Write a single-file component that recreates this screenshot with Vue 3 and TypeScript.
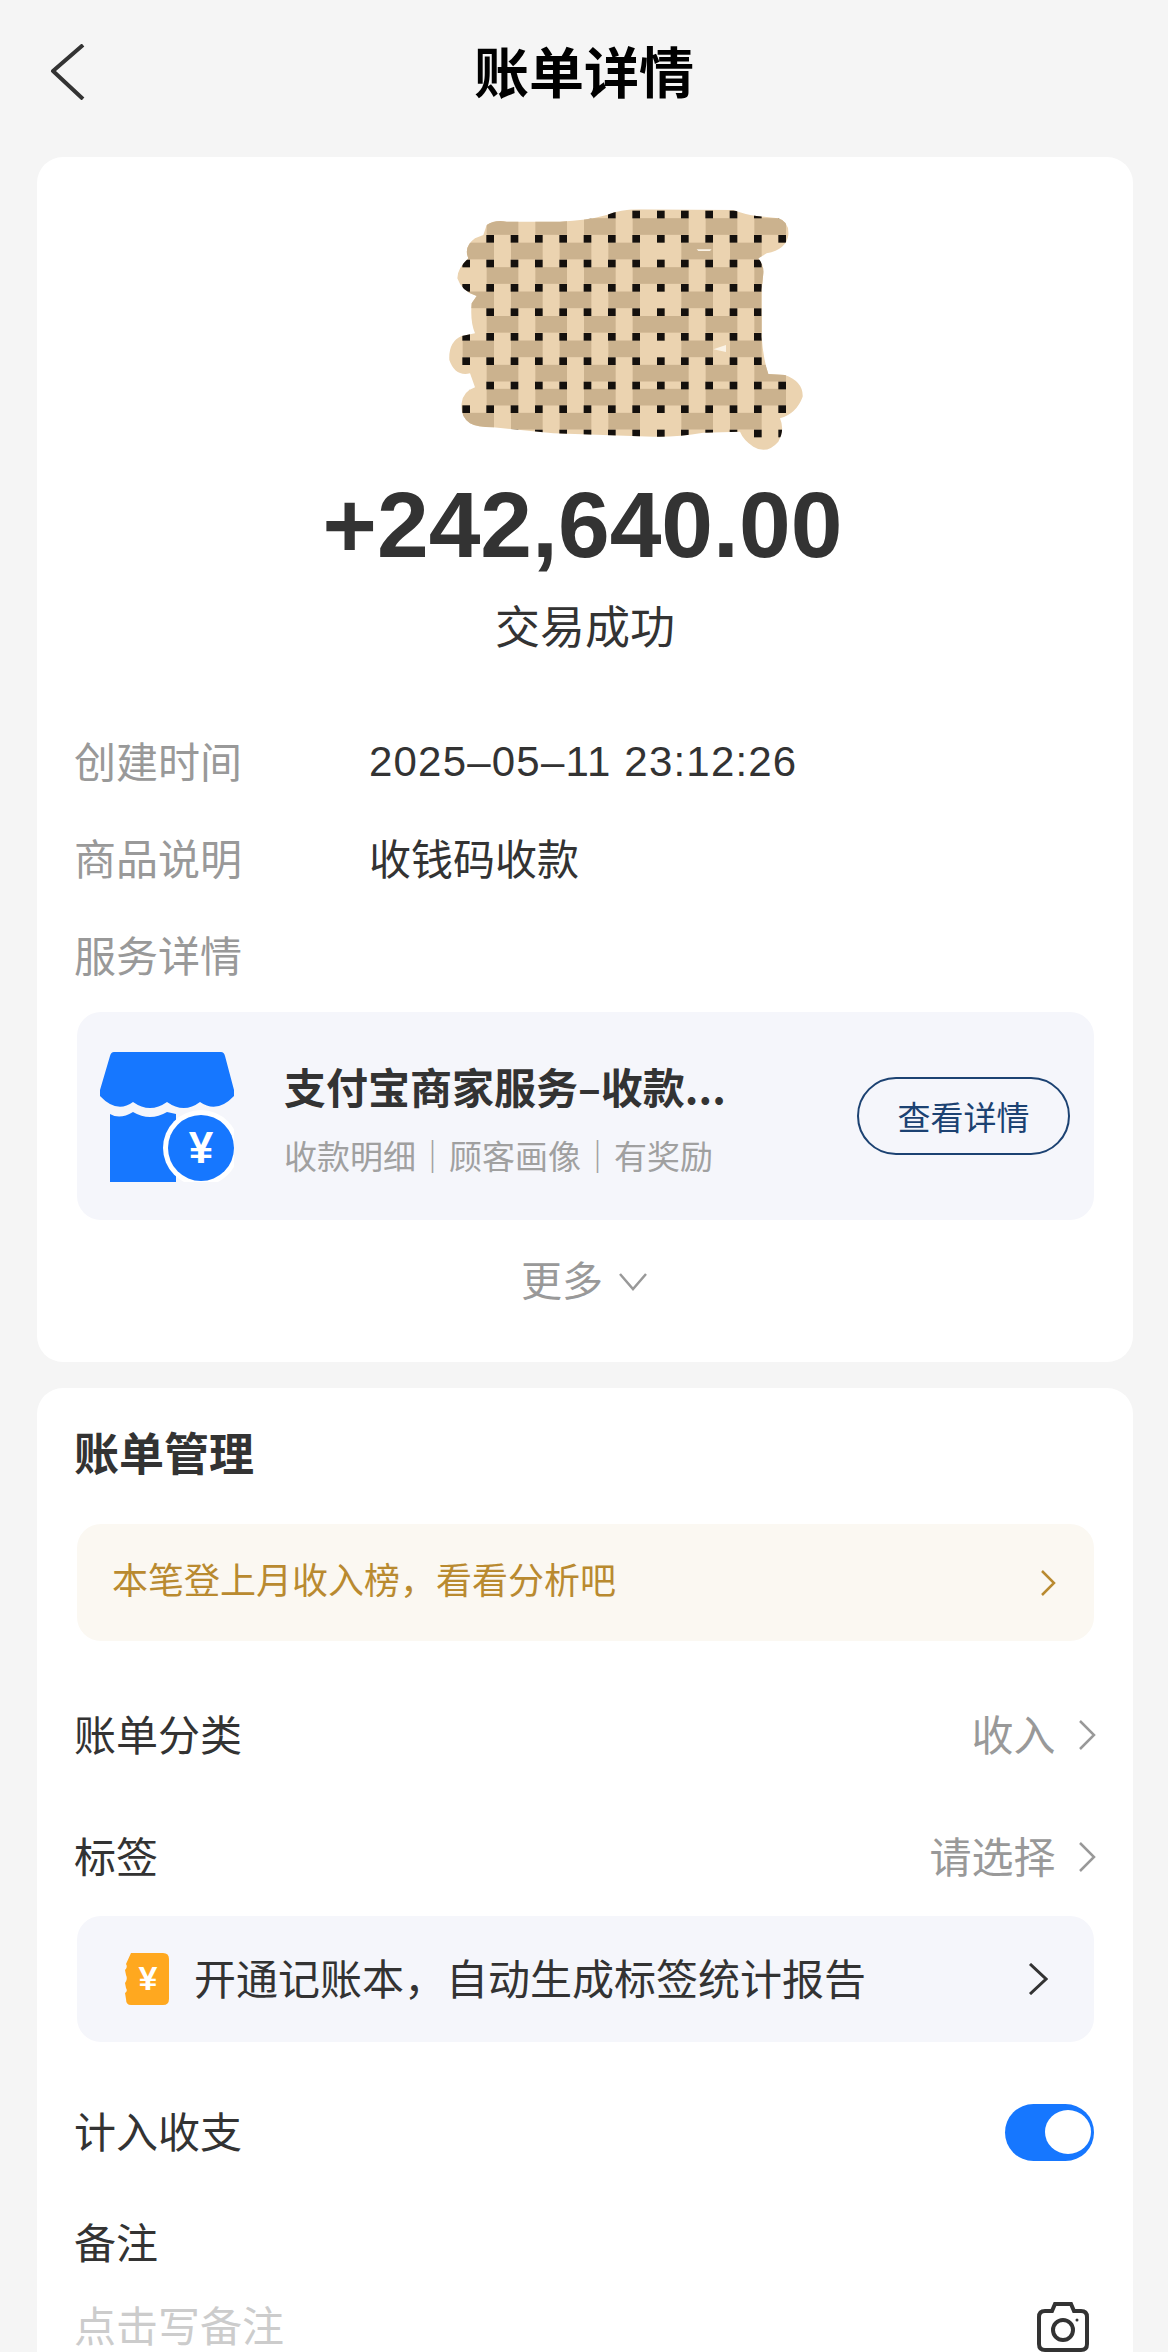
<script setup lang="ts">
// mosaic grid, coordinates are in the 1200x840 viewBox of the redaction block
const colX = [138, 210, 283, 356, 429, 502, 575, 648, 722, 794, 867, 940, 1013, 1086];
const rowY = [73, 146, 220, 293, 366, 440, 513, 586, 657, 730];
const cellsA = [1, 3, 5, 7, 8, 10, 12];
const cellsB = [0, 2, 4, 6, 9, 11];
const rowKinds = ["A", "B", "A", "B", "A", "B", "A", "A", "B"];

const bands = rowKinds.flatMap((kind, r) => {
  const cy = (rowY[r] + rowY[r + 1]) / 2;
  const cells = kind === "A" ? cellsA : cellsB;
  return cells.map((c) => ({
    id: `${r}-${c}`,
    x: colX[c] - 10,
    y: cy - 25,
    w: colX[c + 1] - colX[c] + 22,
  }));
});

const dots = rowY.flatMap((y) => colX.map((x) => ({ id: `${x}-${y}`, x: x - 11, y: y - 11 })));

const blob =
  "M200 105 Q225 88 260 95 L420 95 Q500 92 560 75 Q600 58 660 58 L940 60 Q980 75 1010 78 L1075 85 Q1108 95 1105 135 Q1100 178 1040 190 L1015 205 Q1032 225 1030 250 L1025 300 L1025 440 Q1030 510 1045 552 L1095 555 Q1150 575 1148 620 Q1130 670 1080 685 Q1095 720 1075 755 Q1040 795 1000 770 Q970 750 960 725 L850 728 Q770 742 700 740 L400 730 L220 712 Q170 712 150 700 Q120 680 125 640 Q128 605 165 592 L150 550 Q105 560 88 510 Q85 455 125 438 L165 430 Q150 395 155 340 L170 318 Q125 305 112 265 Q112 235 145 205 Q130 170 165 145 L190 135 Z";
</script>

<template>
  <div class="page">
    <header class="nav">
      <svg class="back" width="36" height="56" viewBox="0 0 36 56">
        <path d="M33 1 L3 27 L33 55" />
      </svg>
      <h1>账单详情</h1>
    </header>

    <section class="card first">
      <svg class="mosaic" width="400" height="280" viewBox="0 0 1200 840">
        <clipPath id="blob-clip"><path :d="blob" /></clipPath>
        <g clip-path="url(#blob-clip)">
          <rect width="1200" height="840" fill="#ebd3b0" />
          <rect v-for="b in bands" :key="b.id" :x="b.x" :y="b.y" :width="b.w" height="50" fill="#cbb28e" />
          <rect v-for="d in dots" :key="d.id" :x="d.x" :y="d.y" width="23" height="23" fill="#14100d" />
          <path d="M830 178 H875 L870 183 H835 Z M880 478 L918 465 V486 Z" fill="#fbf3e6" />
        </g>
      </svg>

      <div class="amount">+242,640.00</div>
      <div class="status">交易成功</div>

      <div class="info-row"><span class="label">创建时间</span><span class="date">2025–05–11 23:12:26</span></div>
      <div class="info-row"><span class="label">商品说明</span><span class="value">收钱码收款</span></div>
      <div class="info-row"><span class="label">服务详情</span></div>

      <div class="service">
        <svg class="store" width="134" height="130" viewBox="0 0 134 130">
          <path
            d="M14 0 H121 Q124 0 125 4 L134 38 V44 Q117 62 100 50 Q84 62 67 50 Q50 62 33 50 Q17 62 0 44 V38 L10 4 Q11 0 14 0 Z"
            fill="#1677ff"
          />
          <path d="M10 62 Q20 68 33 60 Q50 70 67 60 L76 62 V130 H10 Z" fill="#1677ff" />
          <circle cx="101" cy="96" r="38" fill="#fff" />
          <circle cx="101" cy="96" r="33" fill="#1677ff" />
          <text x="101" y="111" text-anchor="middle" class="yen">¥</text>
        </svg>
        <div class="service-text">
          <div class="service-title">支付宝商家服务–收款...</div>
          <div class="service-sub">收款明细｜顾客画像｜有奖励</div>
        </div>
        <button class="detail-btn">查看详情</button>
      </div>

      <div class="more">
        <span>更多</span>
        <svg width="28" height="18" viewBox="0 0 28 18"><path d="M1 1 L14 16 L27 1" /></svg>
      </div>
    </section>

    <section class="card second">
      <h2>账单管理</h2>

      <div class="notice">
        <span>本笔登上月收入榜，看看分析吧</span>
        <svg width="16" height="26" viewBox="0 0 16 26"><path d="M2 1 L14 13 L2 25" /></svg>
      </div>

      <div class="row cat">
        <span>账单分类</span>
        <span class="right">收入<svg width="18" height="30" viewBox="0 0 18 30"><path d="M2 1 L16 15 L2 29" /></svg></span>
      </div>
      <div class="row tag">
        <span>标签</span>
        <span class="right">请选择<svg width="18" height="30" viewBox="0 0 18 30"><path d="M2 1 L16 15 L2 29" /></svg></span>
      </div>

      <div class="promo">
        <svg class="ticket" width="44" height="52" viewBox="0 0 44 52">
          <path
            d="M6 0 H38 Q44 0 44 6 V46 Q44 52 38 52 H6 Q1 52 1 46 L0 40 Q3 38 1 35 L0 30 Q3 26 1 22 L0 17 Q3 14 1 11 Z"
            fill="#ffa81f"
          />
          <text x="23" y="37" text-anchor="middle" class="ticket-yen">¥</text>
        </svg>
        <span class="promo-text">开通记账本，自动生成标签统计报告</span>
        <svg class="promo-arrow" width="20" height="32" viewBox="0 0 20 32"><path d="M2 1 L18 16 L2 31" /></svg>
      </div>

      <div class="row switch-row">
        <span>计入收支</span>
        <div class="toggle"><div class="knob"></div></div>
      </div>

      <div class="row note-title"><span>备注</span></div>
      <div class="row note-input">
        <span class="placeholder">点击写备注</span>
        <svg class="camera" width="52" height="50" viewBox="0 0 52 50">
          <path d="M8 9 H15 L18 2 H34 L37 9 H44 Q50 9 50 15 V42 Q50 48 44 48 H8 Q2 48 2 42 V15 Q2 9 8 9 Z" />
          <circle cx="26" cy="28" r="10" />
          <circle cx="40" cy="18" r="1.5" class="dot" />
        </svg>
      </div>
    </section>
  </div>
</template>

<style scoped>
.page {
  width: 1168px;
  height: 2352px;
  overflow: hidden;
  background: #f5f5f5;
  font-family: "Noto Sans CJK SC", sans-serif;
  color: #333;
}

.nav {
  height: 157px;
  position: relative;
  display: flex;
  justify-content: center;
}

.nav h1 {
  margin: 32px 0 0;
  font-size: 55px;
  line-height: 74px;
  font-weight: 700;
  color: #000;
}

.back {
  position: absolute;
  left: 50px;
  top: 44px;
}

.back path {
  fill: none;
  stroke: #333;
  stroke-width: 4;
  stroke-linejoin: round;
}

.card {
  margin: 0 35px 0 37px;
  background: #fff;
  border-radius: 26px;
}

.first {
  height: 1205px;
  padding: 33px 39px 0 37px;
  box-sizing: border-box;
}

.mosaic {
  display: block;
  margin-left: 346px;
}

.amount {
  margin: 1px 3px 0 0;
  text-align: center;
  font-family: "Liberation Sans", sans-serif;
  font-weight: 700;
  font-size: 93px;
  line-height: 108px;
}

.status {
  margin-top: 16px;
  padding-left: 2px;
  text-align: center;
  font-size: 45px;
  line-height: 60px;
}

.info-row {
  display: flex;
  align-items: center;
  height: 97px;
  font-size: 42px;
}

.status + .info-row {
  margin-top: 56px;
}

.label {
  width: 295px;
  color: #999;
}

.value {
  color: #333;
}

.date {
  padding-top: 5px;
  font-family: "Liberation Sans", sans-serif;
  font-size: 42px;
  letter-spacing: 1.2px;
}

.service {
  margin-top: 10px;
  width: 1017px;
  height: 208px;
  margin-left: 3px;
  display: flex;
  align-items: center;
  box-sizing: border-box;
  padding: 0 24px 0 23px;
  background: #f5f6fb;
  border-radius: 24px;
}

.store {
  flex: none;
  margin-top: 2px;
}

.yen {
  font-family: "Liberation Sans", sans-serif;
  font-size: 44px;
  font-weight: 700;
  fill: #fff;
}

.service-text {
  margin-left: 50px;
  padding-top: 6px;
  flex: 1;
  min-width: 0;
}

.service-title {
  font-size: 42px;
  line-height: 50px;
  font-weight: 700;
  white-space: nowrap;
}

.service-sub {
  margin-top: 22px;
  font-size: 33px;
  line-height: 44px;
  color: #a0a0a0;
  white-space: nowrap;
}

.detail-btn {
  flex: none;
  width: 213px;
  height: 78px;
  padding: 0;
  background: transparent;
  border: 2px solid #1c4272;
  border-radius: 39px;
  color: #1c4272;
  font-family: inherit;
  font-size: 33px;
}

.more {
  margin-top: 16px;
  display: flex;
  justify-content: center;
  align-items: center;
  gap: 16px;
  font-size: 41px;
  line-height: 84px;
  color: #999;
}

.more svg {
  margin-top: 8px;
}

.more path,
.notice path,
.right path,
.promo-arrow path {
  fill: none;
  stroke: #999;
  stroke-width: 2.5;
}

.second {
  margin-top: 26px;
  padding: 0 39px 0 37px;
  height: 1000px;
}

.second h2 {
  margin: 0;
  padding-top: 34px;
  padding-bottom: 1px;
  font-size: 45px;
  line-height: 60px;
  font-weight: 700;
}

.notice {
  margin-top: 41px;
  margin-left: 3px;
  width: 1017px;
  height: 117px;
  box-sizing: border-box;
  padding: 0 38px 0 35px;
  display: flex;
  align-items: center;
  justify-content: space-between;
  background: #fbf8f2;
  border-radius: 24px;
  font-size: 36px;
  color: #b98a30;
}

.notice span {
  padding-bottom: 10px;
}

.notice path {
  stroke: #b98a30;
}

.row {
  display: flex;
  align-items: center;
  justify-content: space-between;
  font-size: 42px;
}

.cat > span:first-child,
.tag > span:first-child,
.switch-row > span,
.note-title > span {
  padding-bottom: 6px;
}

.cat {
  margin-top: 33px;
  height: 122px;
}

.tag {
  height: 122px;
}

.right {
  display: flex;
  align-items: center;
  gap: 22px;
  padding-bottom: 6px;
  color: #999;
}

.right svg {
  margin: 6px -1.5px 0 0;
}

.promo {
  margin-left: 3px;
  width: 1017px;
  height: 126px;
  margin-top: -2px;
  box-sizing: border-box;
  padding: 0 46px 0 48px;
  display: flex;
  align-items: center;
  background: #f5f6fb;
  border-radius: 24px;
}

.ticket-yen {
  font-family: "Liberation Sans", sans-serif;
  font-size: 34px;
  font-weight: 700;
  fill: #fff;
}

.promo-text {
  margin-left: 25px;
  padding-bottom: 6px;
  flex: 1;
  font-size: 42px;
}

.promo-arrow path {
  stroke: #333;
  stroke-width: 3;
}

.switch-row {
  margin-top: 30px;
  height: 120px;
}

.toggle {
  width: 89px;
  height: 57px;
  border-radius: 29px;
  background: #1677ff;
  display: flex;
  align-items: center;
  justify-content: flex-end;
  padding-right: 3px;
  box-sizing: border-box;
}

.knob {
  width: 46px;
  height: 44px;
  border-radius: 50%;
  background: #fff;
}

.note-title {
  height: 102px;
}

.note-input {
  height: 59px;
  margin-top: -1px;
  align-items: flex-start;
}

.placeholder {
  margin-top: 13px;
  line-height: 44px;
  font-family: "Liberation Sans", "Noto Sans CJK SC", sans-serif;
  color: #ccc;
}

.camera {
  margin-right: 5px;
  margin-top: 9px;
}

.camera path,
.camera circle {
  fill: none;
  stroke: #333;
  stroke-width: 4;
}

.camera .dot {
  fill: #333;
  stroke: none;
}
</style>
